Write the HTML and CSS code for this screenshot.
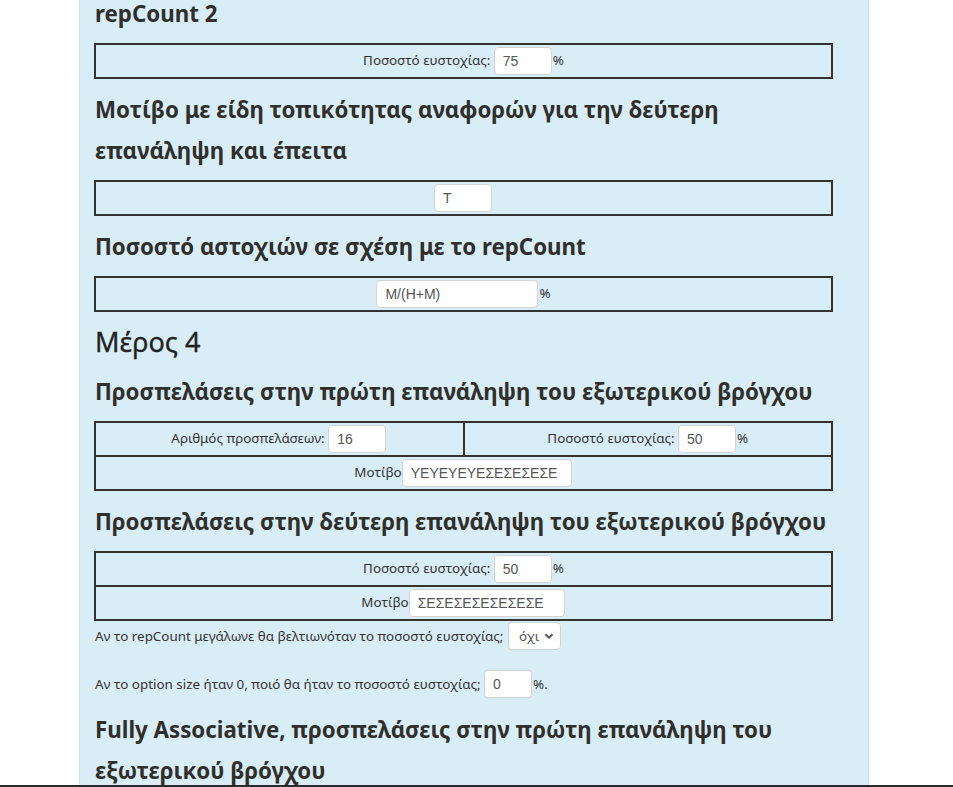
FILE: index.html
```html
<!DOCTYPE html>
<html lang="el">
<head>
<meta charset="utf-8">
<title>Μέρος 4</title>
<link rel="stylesheet" href="styles.css">
</head>
<body>
<div class="page">
  <h3 class="first">repCount 2</h3>
  <table class="grid">
    <tr><td><label>Ποσοστό ευστοχίας:</label> <input class="w58" type="text" value="75">%</td></tr>
  </table>

  <h3>Μοτίβο με είδη τοπικότητας αναφορών για την δεύτερη επανάληψη και έπειτα</h3>
  <table class="grid">
    <tr><td><input class="w58" type="text" value="T"></td></tr>
  </table>

  <h3>Ποσοστό αστοχιών σε σχέση με το repCount</h3>
  <table class="grid">
    <tr><td><input class="w162" type="text" value="M/(H+M)">%</td></tr>
  </table>

  <h2>Μέρος 4</h2>
  <h3>Προσπελάσεις στην πρώτη επανάληψη του εξωτερικού βρόγχου</h3>
  <table class="grid">
    <tr>
      <td class="half"><label>Αριθμός προσπελάσεων:</label> <input class="w58" type="text" value="16"></td>
      <td class="half"><label>Ποσοστό ευστοχίας:</label> <input class="w58" type="text" value="50">%</td>
    </tr>
    <tr><td colspan="2"><label>Μοτίβο</label><input class="w170" type="text" value="ΥΕΥΕΥΕΥΕΣΕΣΕΣΕΣΕ"></td></tr>
  </table>

  <h3>Προσπελάσεις στην δεύτερη επανάληψη του εξωτερικού βρόγχου</h3>
  <table class="grid">
    <tr><td><label>Ποσοστό ευστοχίας:</label> <input class="w58" type="text" value="50">%</td></tr>
    <tr><td><label>Μοτίβο</label><input class="w155" type="text" value="ΣΕΣΕΣΕΣΕΣΕΣΕΣΕ"></td></tr>
  </table>

  <div class="question">Αν το repCount μεγάλωνε θα βελτιωνόταν το ποσοστό ευστοχίας; <span class="select">όχι<svg width="10" height="10" viewBox="0 0 10 10"><path d="M1.5 3.2 L5 6.7 L8.5 3.2" fill="none" stroke="#555" stroke-width="2"/></svg></span></div>
  <div class="question last">Αν το option size ήταν 0, ποιό θα ήταν το ποσοστό ευστοχίας; <input class="w48" type="text" value="0">%.</div>

  <h3>Fully Associative, προσπελάσεις στην πρώτη επανάληψη του εξωτερικού βρόγχου</h3>
</div>
<div class="bottom-line"></div>
</body>
</html>
```

FILE: styles.css
```css
html, body {
  margin: 0;
  padding: 0;
  background: #ffffff;
  overflow: hidden;
  height: 787px;
}
body {
  font-family: "Noto Sans", "DejaVu Sans", sans-serif;
  color: #333333;
  font-size: 13.4px;
}
.page {
  margin: -7px 0 0 79px;
  width: 739px;
  padding: 0 35px 40px 14px;
  background: #d9edf7;
  border-left: 1px solid #c4e6f2;
  border-right: 1px solid #bce8f1;
  min-height: 900px;
}
h3 {
  font-size: 22.3px;
  font-weight: bold;
  line-height: 41px;
  margin: 10px 0 9px 1px;
  color: #2f2f2b;
}
h3.first {
  margin-top: 0;
}
h2 {
  font-size: 27px;
  font-weight: normal;
  line-height: 30px;
  margin: 15px 0 14px 1px;
  color: #22221f;
  -webkit-text-stroke: 0.3px #22221f;
}
.grid {
  width: 739px;
  border-collapse: collapse;
  border: 2px solid #333333;
}
.grid td {
  border: 2px solid #333333;
  height: 30px;
  padding: 1px 0;
  text-align: center;
  vertical-align: middle;
}
.grid td.half {
  width: 50%;
}
label {
  font-size: 13.4px;
}
input {
  font-family: "Liberation Sans", Arial, sans-serif;
  font-size: 14px;
  color: #555555;
  height: 28px;
  box-sizing: border-box;
  padding: 2px 8px;
  border: 1px solid #d4d4d4;
  border-radius: 4px;
  background: #ffffff;
  vertical-align: middle;
  margin: 0 1px 0 0;
}
.w58 { width: 58px; }
.w48 { width: 48px; }
.w155 { width: 156px; }
.w162 { width: 162px; }
.w170 { width: 170px; }
.question {
  height: 30px;
  display: flex;
  align-items: center;
  margin: 0 0 18px 1px;
  white-space: pre;
}
.question.last {
  margin-bottom: 0;
}
.select {
  display: inline-flex;
  align-items: center;
  justify-content: space-between;
  box-sizing: border-box;
  width: 53px;
  height: 28px;
  padding: 0 6px 0 10px;
  border: 1px solid #d4d4d4;
  border-radius: 4px;
  background: #ffffff;
  color: #555555;
  font-size: 13.4px;
  margin-left: 1px;
}
.bottom-line {
  position: fixed;
  left: 0;
  right: 0;
  bottom: 0;
  height: 2px;
  background: #2b2b2b;
}
```
